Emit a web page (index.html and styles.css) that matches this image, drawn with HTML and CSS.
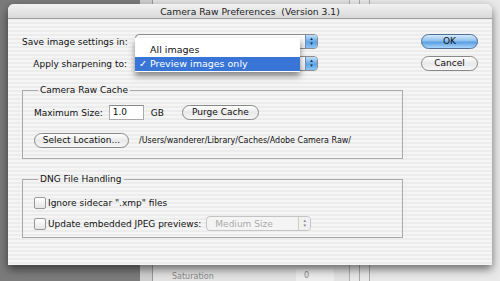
FILE: index.html
```html
<!DOCTYPE html>
<html>
<head>
<meta charset="utf-8">
<link rel="stylesheet" href="styles.css">
</head>
<body>
<div class="desk">
  <div class="bgwin">
    <div class="bg-side"></div>
    <div class="bg-panel">
      <div class="bg-row"><span class="bg-label">Saturation</span><span class="bg-field">0</span></div>
    </div>
    <div class="bg-rule"></div>
    <div class="bg-rule"></div>
  </div>

  <div class="dialog">
    <div class="titlebar">Camera Raw Preferences&nbsp; (Version 3.1)</div>
    <div class="body">
      <div class="top">
        <div class="settings">
          <div class="row">
            <span class="label">Save image settings in:</span>
            <div class="popup"><span class="ptext">Sidecar ".xmp" files</span><span class="arrows">▴<br>▾</span></div>
          </div>
          <div class="row">
            <span class="label">Apply sharpening to:</span>
            <div class="popup"><span class="ptext">Preview images only</span><span class="arrows">▴<br>▾</span></div>
          </div>
        </div>
        <div class="buttons">
          <div class="btn default">OK</div>
          <div class="btn">Cancel</div>
        </div>
      </div>

      <fieldset class="group">
        <legend>Camera Raw Cache</legend>
        <div class="grow">
          <span>Maximum Size:</span>
          <span class="field">1.0</span>
          <span class="unit">GB</span>
          <div class="btn small purge">Purge Cache</div>
        </div>
        <div class="grow second">
          <div class="btn small locate">Select Location...</div>
          <span class="path">/Users/wanderer/Library/Caches/Adobe Camera Raw/</span>
        </div>
      </fieldset>

      <fieldset class="group dng">
        <legend>DNG File Handling</legend>
        <div class="crow"><span class="check"></span><span>Ignore sidecar ".xmp" files</span></div>
        <div class="crow"><span class="check"></span><span>Update embedded JPEG previews:</span>
          <div class="popup disabled"><span class="ptext">Medium Size</span><span class="arrows">▴<br>▾</span></div>
        </div>
      </fieldset>
    </div>

    <div class="menu">
      <div class="item">All images</div>
      <div class="item selected"><span class="tick">✓</span>Preview images only</div>
    </div>
  </div>
</div>
</body>
</html>
```
FILE: styles.css
```css
html, body {
  margin: 0;
  padding: 0;
}
body {
  width: 500px;
  height: 281px;
  overflow: hidden;
  background: #7b7b7b;
  font-family: "DejaVu Sans", "Liberation Sans", sans-serif;
  font-size: 9px;
  color: #111;
  white-space: nowrap;
}
.desk {
  position: relative;
  width: 500px;
  height: 281px;
}
.bgwin {
  position: absolute;
  left: 140px;
  top: 0;
  right: 0;
  bottom: 0;
  background: #e9e9e9;
  display: flex;
}
.bg-side {
  width: 12px;
  background: #cfcfcf;
  border-right: 1px solid #9a9a9a;
}
.bg-panel {
  width: 196px;
  background: #e2e2e2;
  border-right: 1px solid #b0b0b0;
  display: flex;
  flex-direction: column;
  justify-content: flex-end;
}
.bg-row {
  display: flex;
  align-items: center;
  height: 14px;
  margin-bottom: -2px;
  padding-left: 19px;
  color: #888;
  font-size: 8px;
}
.bg-label { width: 124px; }
.bg-field {
  width: 30px;
  padding-left: 8px;
  background: #ededed;
  height: 14px;
  line-height: 14px;
}
.bg-rule {
  width: 9px;
  border-right: 1px solid #aaa;
}

.dialog {
  position: absolute;
  left: 8px;
  top: 4px;
  width: 484px;
  height: 261px;
  border-radius: 6px 6px 0 0;
  box-shadow: 0 4px 10px rgba(0,0,0,.55);
  background: repeating-linear-gradient(#f5f5f5 0 2px, #ececec 2px 4px);
}
.titlebar {
  height: 14px;
  line-height: 15px;
  text-align: center;
  border-radius: 6px 6px 0 0;
  background: linear-gradient(#f2f2f2, #d9d9d9);
  border-bottom: 1px solid #9d9d9d;
  font-size: 9.2px;
  color: #222;
}
.body {
  padding: 15px 14px 0 14px;
}
.top {
  display: flex;
  justify-content: space-between;
}
.settings {
  display: flex;
  flex-direction: column;
  gap: 7px;
}
.row {
  display: flex;
  align-items: center;
  gap: 8px;
}
.label {
  width: 105px;
  text-align: right;
}
.popup {
  width: 181px;
  height: 13px;
  border: 1px solid #8c8c8c;
  border-radius: 4px;
  background: linear-gradient(#ffffff, #e8e8e8);
  display: flex;
  align-items: center;
  overflow: hidden;
}
.ptext {
  flex: 1;
  padding-left: 8px;
}
.arrows {
  width: 12px;
  height: 13px;
  background: linear-gradient(#bfe0fb, #5ea4e6 55%, #8cc3f3);
  border-left: 1px solid #6d8fb3;
  font-size: 5px;
  line-height: 5px;
  text-align: center;
  padding-top: 1px;
  box-sizing: border-box;
  color: #102a4a;
}
.buttons {
  display: flex;
  flex-direction: column;
  gap: 7px;
}
.btn {
  width: 55px;
  height: 13px;
  line-height: 13px;
  text-align: center;
  border: 1px solid #888;
  border-radius: 8px;
  background: linear-gradient(#ffffff, #e9e9e9 50%, #f6f6f6);
}
.btn.default {
  background: linear-gradient(#d4e9fc, #8fc1ef 45%, #5a9fe2 55%, #a9d5fb);
  border-color: #4f6f92;
}

.group {
  margin: 14px 0 0 0;
  width: 381px;
  box-sizing: border-box;
  border: 1px solid #a9a9a9;
  padding: 10px 11px 4px 11px;
}
.group legend {
  padding: 0 2px;
  margin-left: 4px;
  line-height: 10px;
}
.grow {
  display: flex;
  align-items: center;
  height: 15px;
}
.field {
  width: 30px;
  height: 13px;
  line-height: 13px;
  margin-left: 6px;
  padding-left: 3px;
  background: #fff;
  border: 1px solid #aaa;
  border-top-color: #888;
}
.unit {
  margin-left: 7px;
}
.btn.small {
  height: 13px;
  border-radius: 8px;
}
.purge {
  width: 75px;
  margin-left: 18px;
}
.grow.second {
  margin-top: 13px;
  margin-bottom: 6px;
}
.locate {
  width: 93px;
}
.path {
  margin-left: 10px;
  font-size: 8px;
}
.dng {
  margin-top: 15px;
  height: 64px;
  padding-top: 11px;
}
.crow {
  display: flex;
  align-items: center;
  height: 15px;
  margin-bottom: 6px;
}
.check {
  width: 10px;
  height: 10px;
  border: 1px solid #999;
  border-radius: 2px;
  background: linear-gradient(#fff, #e6e6e6);
  margin-right: 2px;
}
.popup.disabled {
  width: 103px;
  margin-left: 5px;
  border-color: #c4c4c4;
  color: #aaa;
  background: #f4f4f4;
}
.popup.disabled .arrows {
  background: #f1f1f1;
  border-left-color: #ccc;
  color: #888;
}

.menu {
  position: absolute;
  left: 127px;
  top: 34px;
  width: 165px;
  padding: 5px 0 1px 0;
  background: #fff;
  box-shadow: 0 4px 6px rgba(0,0,0,.45);
}
.item {
  height: 14px;
  line-height: 14px;
  padding-left: 15px;
  position: relative;
  font-size: 9.5px;
}
.item.selected {
  background: #3875d7;
  color: #fff;
}
.tick {
  position: absolute;
  left: 4px;
  font-weight: bold;
}
```
